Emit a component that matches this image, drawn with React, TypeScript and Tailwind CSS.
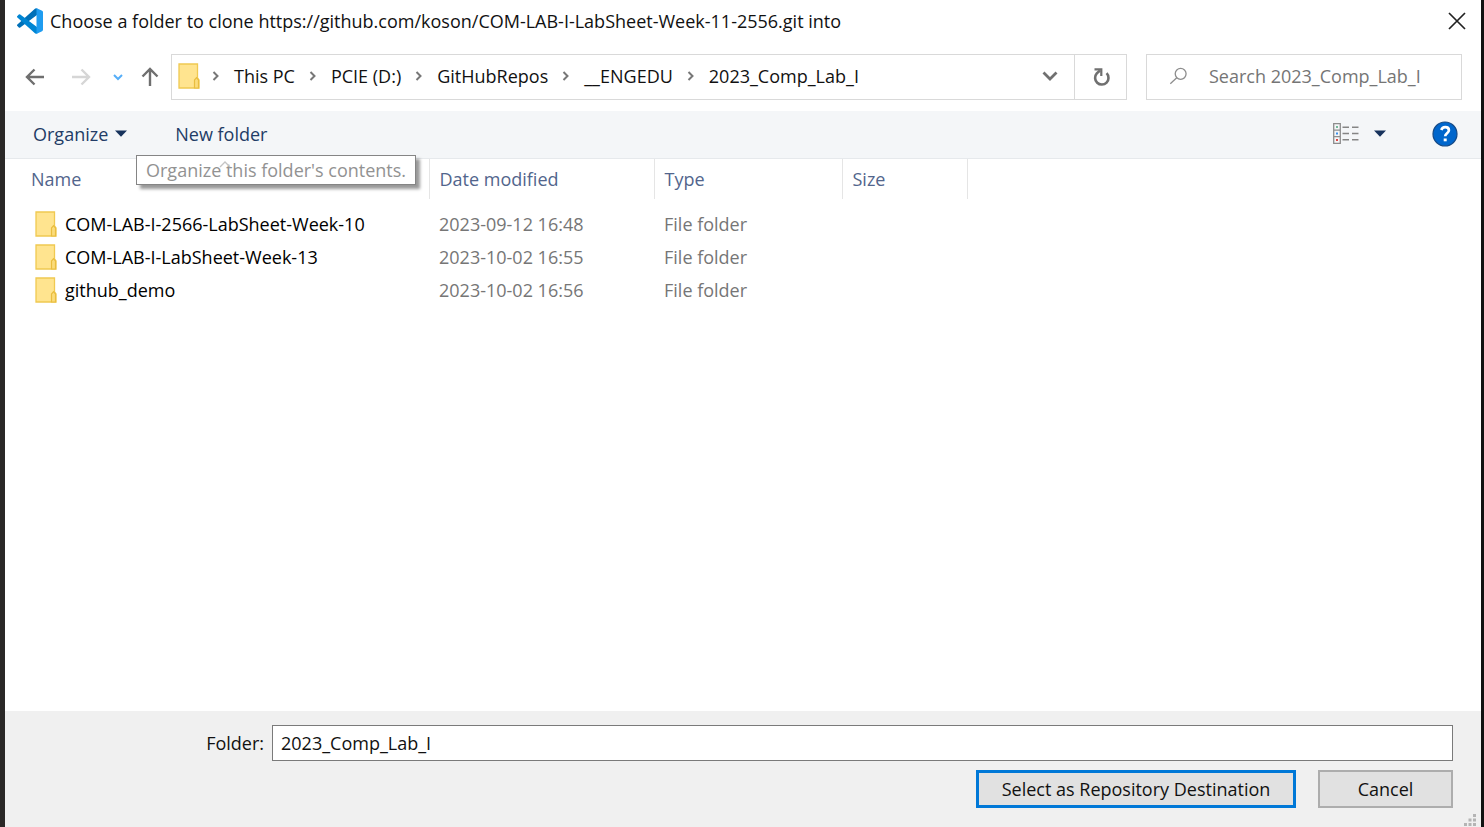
import { Fragment, useState } from "react";

const crumbs = ["This PC", "PCIE (D:)", "GitHubRepos", "__ENGEDU", "2023_Comp_Lab_I"];

const folders = [
  { name: "COM-LAB-I-2566-LabSheet-Week-10", modified: "2023-09-12 16:48" },
  { name: "COM-LAB-I-LabSheet-Week-13", modified: "2023-10-02 16:55" },
  { name: "github_demo", modified: "2023-10-02 16:56" },
];

function CodeLogo() {
  return (
    <svg width="26" height="26" viewBox="0 0 100 100" aria-hidden="true">
      <path fill="#0070b8" d="M70 2 1.500 63a4.500 4.500 0 0 0 0 6.500L7 75a4.500 4.500 0 0 0 5.500.2L78 26V2z" />
      <path fill="#0085d3" d="M70 98 1.500 37a4.500 4.500 0 0 1 0-6.500L7 25a4.500 4.500 0 0 1 5.500-.2L78 74v24z" />
      <path
        fill="#1f9cf0"
        d="M75.900 99.100a6.200 6.200 0 0 1-7.100-1.200c2.300 2.300 6.200.7 6.200-2.600V4.700c0-3.300-3.900-4.900-6.200-2.600a6.200 6.200 0 0 1 7.100-1.200l20.600 9.900a6.200 6.200 0 0 1 3.500 5.600v67.200a6.200 6.200 0 0 1-3.500 5.600z"
      />
    </svg>
  );
}

function FolderIcon() {
  return (
    <svg width="22" height="26" viewBox="0 0 22 26" className="shrink-0" aria-hidden="true">
      <path d="M1 1h18.500v14l1.500 2v8H1z" fill="#ffe48f" stroke="#f0c951" strokeWidth="1.300" />
      <path d="M16.500 25v-8l2-2.300 2 2.300v8z" fill="#fbdc7b" stroke="#e9bd3f" strokeWidth="1.200" />
    </svg>
  );
}

function Arrow({ className }: { className: string }) {
  return (
    <svg
      width="20"
      height="18"
      viewBox="0 0 20 18"
      fill="none"
      stroke="currentColor"
      strokeWidth="2.400"
      className={className}
      aria-hidden="true"
    >
      <path d="M19 9H2M9.500 1.500 2 9l7.500 7.500" />
    </svg>
  );
}

function Crumb() {
  return (
    <svg width="8" height="10" viewBox="0 0 8 10" fill="none" stroke="#777" strokeWidth="2" aria-hidden="true">
      <path d="m1.500 1 4 4-4 4" />
    </svg>
  );
}

function Caret() {
  return (
    <svg width="12" height="7" viewBox="0 0 12 7" aria-hidden="true">
      <path d="M0 .5h12L6 6.800z" fill="#17325c" />
    </svg>
  );
}

function DetailsIcon() {
  return (
    <svg width="26" height="21" viewBox="0 0 26 21" fill="none" aria-hidden="true">
      <path d="M.7.700h6.600v19.600H.7zM.7 7.200h6.600M.7 13.700h6.600" stroke="#8d8d8d" strokeWidth="1.300" />
      <path d="M3 4h2" stroke="#4aa57a" strokeWidth="1.600" />
      <path d="M3 10.500h2" stroke="#3b8ee8" strokeWidth="2" />
      <path d="M3 17h2" stroke="#e04444" strokeWidth="2" />
      <path
        d="M9.500 4.200h6.500M19 4.200h6.500M9.500 10.500h6.500M19 10.500h6.500M9.500 16.800h6.500M19 16.800h6.500"
        stroke="#858585"
        strokeWidth="1.600"
      />
    </svg>
  );
}

export default function App() {
  const [folder, setFolder] = useState("2023_Comp_Lab_I");
  const [query, setQuery] = useState("");

  return (
    <div className="flex min-h-screen flex-col border-r-[3px] border-l-[5px] border-r-[#111] border-l-[#2a2827] bg-white font-[Open_Sans,sans-serif] text-[18px] leading-6 text-[#111]">
      <header className="flex h-[42px] items-center justify-between pr-[15px] pl-3">
        <div className="flex items-center gap-[7px]">
          <CodeLogo />
          <h1 className="whitespace-nowrap">
            Choose a folder to clone https://github.com/koson/COM-LAB-I-LabSheet-Week-11-2556.git into
          </h1>
        </div>
        <button type="button" aria-label="Close">
          <svg width="18" height="18" viewBox="0 0 18 18" stroke="#222" strokeWidth="1.700" aria-hidden="true">
            <path d="m1 1 16 16M17 1 1 17" />
          </svg>
        </button>
      </header>

      <nav className="flex items-center pt-3 pr-[19px] pb-[11px] pl-5" aria-label="Location">
        <button type="button" aria-label="Back" className="text-[#6f6f6f]">
          <Arrow className="" />
        </button>
        <button type="button" aria-label="Forward" className="ml-[26px] text-[#d6d6d6]">
          <Arrow className="rotate-180" />
        </button>
        <button type="button" aria-label="Recent locations" className="ml-[22px]">
          <svg width="10" height="7" viewBox="0 0 10 7" fill="none" stroke="#55aef8" strokeWidth="2" aria-hidden="true">
            <path d="m1 1 4 4 4-4" />
          </svg>
        </button>
        <button type="button" aria-label="Up" className="ml-[17px] text-[#6f6f6f]">
          <Arrow className="rotate-90" />
        </button>
        <div className="ml-[11px] flex h-[46px] grow border border-[#d9d9d9]">
          <div className="flex grow items-center pb-0.5 pl-1.5">
            <FolderIcon />
            <ol className="ml-3 flex items-center">
              {crumbs.map((crumb) => (
                <Fragment key={crumb}>
                  <li aria-hidden="true">
                    <Crumb />
                  </li>
                  <li className="mr-3.5 ml-3.5">
                    <a href="#" className="whitespace-nowrap">
                      {crumb}
                    </a>
                  </li>
                </Fragment>
              ))}
            </ol>
            <button type="button" aria-label="Previous locations" className="mr-4 ml-auto">
              <svg width="16" height="10" viewBox="0 0 16 10" fill="none" stroke="#707070" strokeWidth="2.800" aria-hidden="true">
                <path d="m1.500 1.500 6.500 6.500 6.500-6.500" />
              </svg>
            </button>
          </div>
          <button
            type="button"
            aria-label="Refresh"
            className="flex w-[52px] items-center justify-center border-l border-[#d9d9d9]"
          >
            <svg width="18" height="20" viewBox="0 0 18 20" fill="none" stroke="#707070" strokeWidth="2.600" aria-hidden="true">
              <path d="M14.600 6.200A6.700 6.700 0 1 1 4.800 6.400L8 3.500" />
              <path d="M2.500 2.300h6.800v6.700" strokeWidth="2.200" />
            </svg>
          </button>
        </div>
        <label className="ml-[19px] flex h-[46px] w-[316px] items-center border border-[#d9d9d9] pb-0.5 pl-[22px]">
          <svg width="22" height="20" viewBox="0 0 22 20" fill="none" stroke="#8d8d8d" strokeWidth="1.500" aria-hidden="true">
            <circle cx="13.500" cy="7.500" r="6.300" />
            <path d="M9.300 11.700 1.500 19" />
          </svg>
          <input
            type="search"
            aria-label="Search 2023_Comp_Lab_I"
            placeholder="Search 2023_Comp_Lab_I"
            value={query}
            onChange={(e) => setQuery(e.target.value)}
            className="ml-[21px] w-full min-w-0 outline-none placeholder:text-[#757575]"
          />
        </label>
      </nav>

      <div className="flex h-12 items-center border-b border-[#e6e9ec] bg-[#f4f6f8] pr-[23px] pb-0.5 pl-7 text-[#223c66]">
        <div className="relative">
          <button type="button" className="flex items-center gap-[7px]">
            Organize
            <Caret />
          </button>
          <div
            role="tooltip"
            className="absolute top-[33px] left-[103px] border border-[#858585] bg-white px-[9px] py-0.5 whitespace-nowrap text-[#929292] shadow-[4px_4px_3px_#0006]"
          >
            Organize this folder's contents.
          </div>
        </div>
        <button type="button" className="ml-12">
          New folder
        </button>
        <button type="button" aria-label="Change your view" className="ml-auto flex items-center gap-[15px]">
          <DetailsIcon />
          <Caret />
        </button>
        <button type="button" aria-label="Help" className="ml-[46px]">
          <svg width="26" height="26" viewBox="0 0 26 26" fill="none" aria-hidden="true">
            <circle cx="13" cy="13" r="12" fill="#0066cc" stroke="#164a86" strokeWidth="1.200" />
            <path d="M9.300 9c.6-2 2-2.900 3.900-2.900 2.200 0 3.700 1.200 3.700 3.100 0 3-3.700 3-3.700 6" stroke="#fff" strokeWidth="2.700" />
            <path d="M11.700 17.500h3v2.800h-3z" fill="#fff" />
          </svg>
        </button>
      </div>

      <main className="grow pl-[17px]">
        <table className="w-full table-fixed border-collapse text-left">
          <colgroup>
            <col className="w-[407px]" />
            <col className="w-[225px]" />
            <col className="w-[188px]" />
            <col className="w-[125px]" />
            <col />
          </colgroup>
          <thead className="text-[#52658c]">
            <tr className="h-10">
              <th scope="col" className="relative border-r border-[#e5e5e5] pl-[9px] font-normal">
                Name
                <svg
                  width="12"
                  height="7"
                  viewBox="0 0 12 7"
                  fill="none"
                  stroke="#c4c4c4"
                  strokeWidth="1.300"
                  className="absolute top-0.5 left-1/2 -translate-x-1/2"
                  aria-hidden="true"
                >
                  <path d="m1 6 5-5 5 5" />
                </svg>
              </th>
              <th scope="col" className="border-r border-[#e5e5e5] pl-2.5 font-normal">
                Date modified
              </th>
              <th scope="col" className="border-r border-[#e5e5e5] pl-2.5 font-normal">
                Type
              </th>
              <th scope="col" className="border-r border-[#e5e5e5] pl-2.5 font-normal">
                Size
              </th>
              <td />
            </tr>
          </thead>
          <tbody className="text-[#767676]">
            <tr className="h-2">
              <td colSpan={5} />
            </tr>
            {folders.map((item) => (
              <tr key={item.name} className="h-[33px]">
                <td className="pl-[13px] text-black">
                  <div className="flex items-center gap-2 whitespace-nowrap">
                    <FolderIcon />
                    {item.name}
                  </div>
                </td>
                <td className="pl-2.5">{item.modified}</td>
                <td className="pl-2.5">File folder</td>
                <td />
                <td />
              </tr>
            ))}
          </tbody>
        </table>
      </main>

      <footer className="relative bg-[#f0f0f0] pt-3.5 pr-7 pb-[19px]">
        <div className="flex items-center">
          <label htmlFor="folder" className="w-[259px] shrink-0 text-right">
            Folder:
          </label>
          <input
            id="folder"
            type="text"
            value={folder}
            onChange={(e) => setFolder(e.target.value)}
            className="ml-2 h-9 min-w-0 grow border border-[#7a7a7a] bg-white px-2 outline-none"
          />
        </div>
        <div className="mt-[9px] flex justify-end gap-[22px]">
          <button type="button" className="h-[38px] w-80 border-[3px] border-[#0078d7] bg-[#e1e1e1]">
            Select as Repository Destination
          </button>
          <button type="button" className="h-[38px] w-[135px] border-2 border-[#adadad] bg-[#e1e1e1]">
            Cancel
          </button>
        </div>
        <svg width="14" height="14" viewBox="0 0 14 14" fill="#b4b4b4" className="absolute right-1 bottom-0" aria-hidden="true">
          <path d="M10 1h3v3h-3zM5.500 5.500h3v3h-3zM10 5.500h3v3h-3zM1 10h3v3H1zM5.500 10h3v3h-3zM10 10h3v3h-3z" />
        </svg>
      </footer>
    </div>
  );
}
